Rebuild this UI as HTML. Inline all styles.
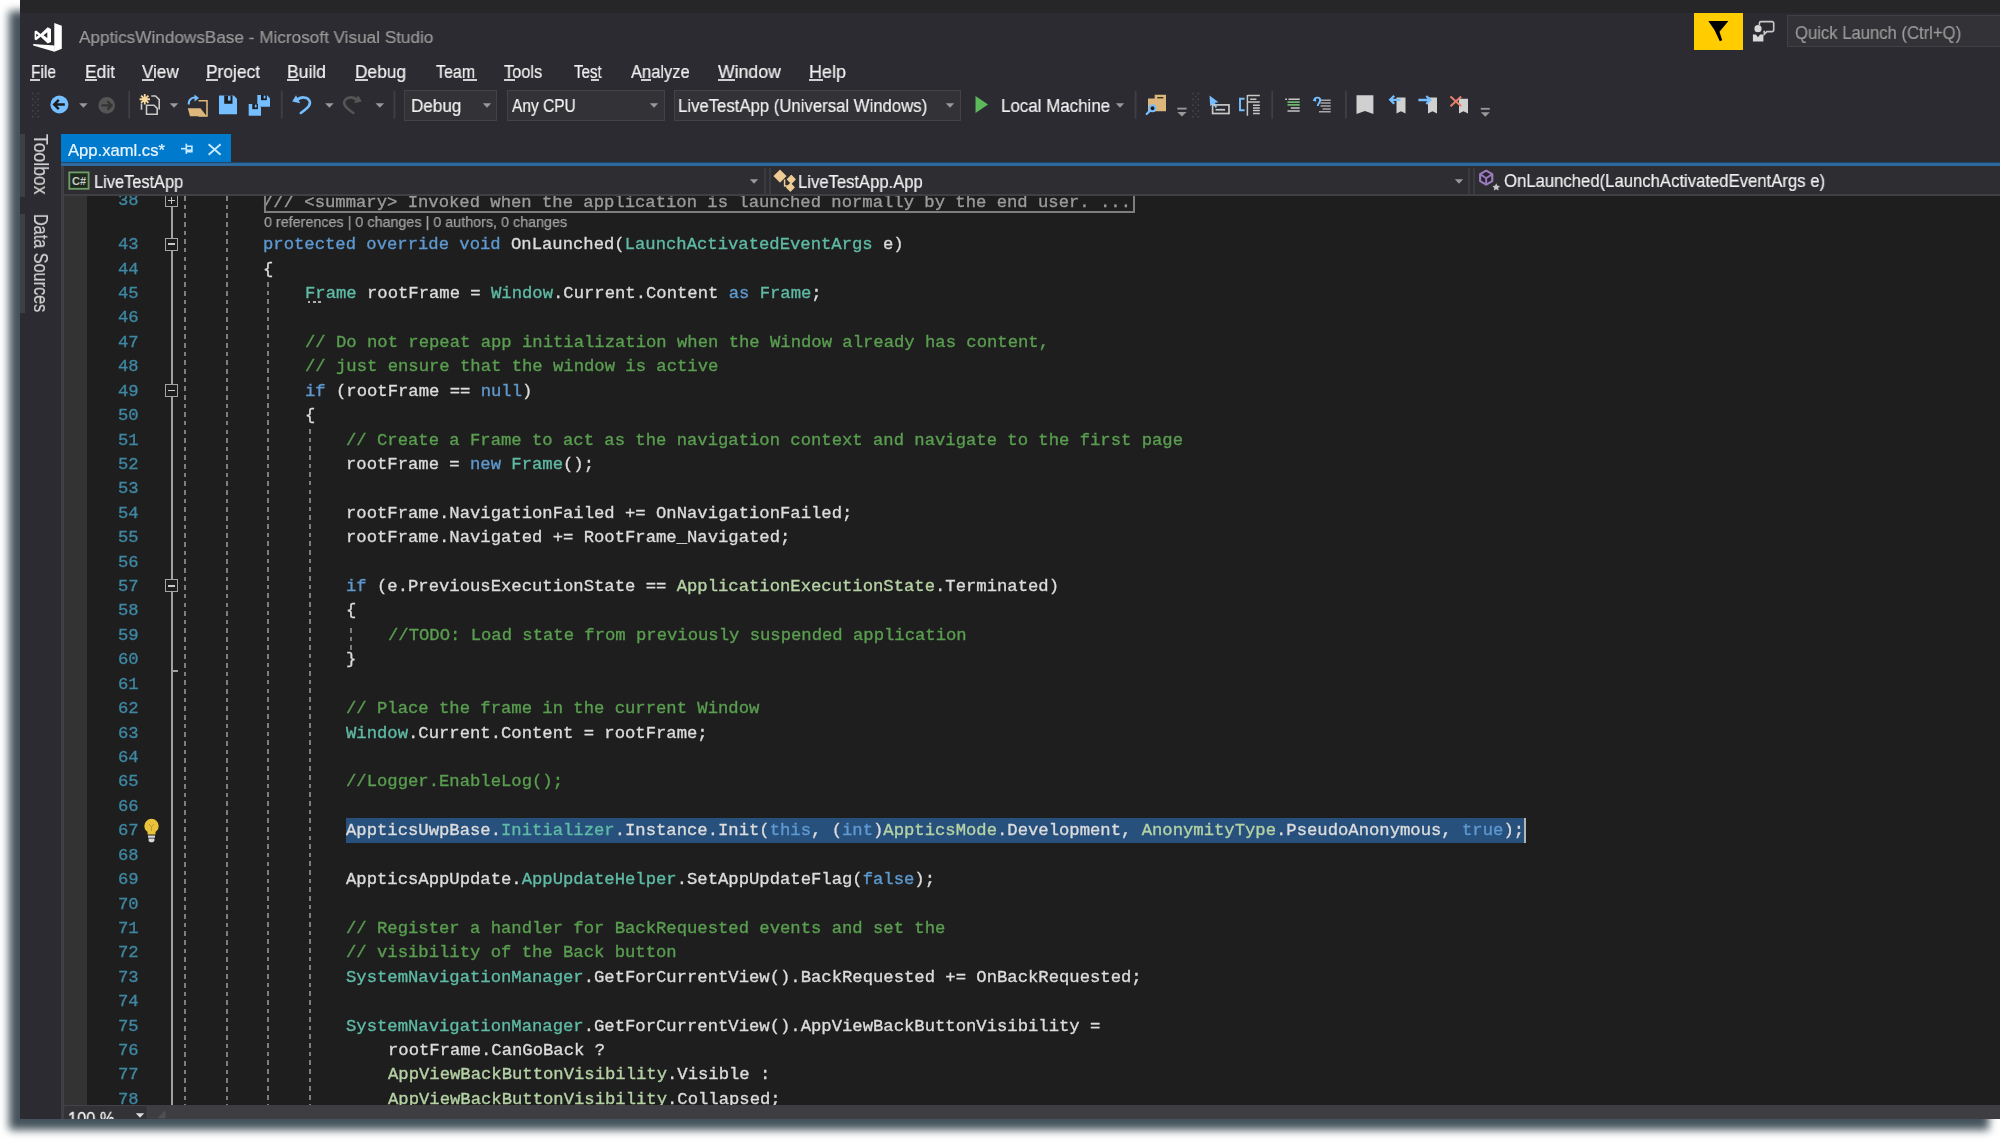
<!DOCTYPE html><html><head><meta charset="utf-8"><style>
html,body{margin:0;padding:0}
body{width:2000px;height:1139px;background:#fff;overflow:hidden;position:relative;font-family:"Liberation Sans",sans-serif;-webkit-font-smoothing:antialiased}
.m,.t{will-change:transform}
.b{position:absolute}
.t{position:absolute;white-space:pre;line-height:1;transform-origin:0 0;font-family:"Liberation Sans",sans-serif;-webkit-text-stroke:0.2px currentColor}
.t u{text-decoration:none;border-bottom:1.3px solid currentColor;display:inline-block;line-height:1;padding-bottom:0}
.m{position:absolute;white-space:pre;line-height:1;font-family:"Liberation Mono",monospace;letter-spacing:0;-webkit-text-stroke:0.35px currentColor}
svg{position:absolute;overflow:visible}

</style></head><body>
<div class="b" style="left:9px;top:11px;width:1980px;height:1119px;background:#44535d;filter:blur(4.5px)"></div>
<div class="b" style="left:20.00px;top:0.00px;width:1980.00px;height:1119.00px;background:#2B2B31;"></div>
<div class="b" style="left:20.00px;top:0.00px;width:1980.00px;height:12.60px;background:#262628;"></div>
<svg style="left:30px;top:20px;" width="36" height="36" viewBox="0 0 36 36"><g transform="translate(-30,-20)" fill="#fff"><path d="M54.3 23 L61.8 25.7 L61.8 48.8 L54.3 51.8 Z"/><path d="M33.2 44 L54.6 45.6 L54.6 51.8 L33.2 45.4 Z"/><path fill-rule="evenodd" d="M34.6 31.3 L36.3 30.4 L40.6 33.9 L47.7 27.2 L51.0 28.9 L51.0 41.9 L47.7 43.5 L40.6 36.8 L36.3 40.3 L34.6 39.5 Z M36.3 33.7 L36.3 37.0 L38.5 35.35 Z M43.5 35.3 L47.3 38.1 L47.3 32.3 Z"/></g></svg>
<div class="t" style="left:79.10px;top:29px;font-size:17.4px;color:#999999;transform:scaleX(0.9865);">AppticsWindowsBase - Microsoft Visual Studio</div>
<div class="b" style="left:1693.80px;top:13.10px;width:49.20px;height:36.60px;background:#FFCC00;"></div>
<svg style="left:1700px;top:15px;" width="40" height="34" viewBox="0 0 40 34"><g transform="translate(-1700,-15)"><path d="M1708.3 20.9 L1728.4 20.9 L1719.5 31.8 L1722.2 40.2 L1719.8 41.3 L1714.5 30.0 Z" fill="#000"/></g></svg>
<svg style="left:1750px;top:18px;" width="28" height="28" viewBox="0 0 28 28"><g transform="translate(-1750,-18)"><path d="M1759.4 25 v-1.8 a1.6 1.6 0 0 1 1.6 -1.6 h11.1 a1.6 1.6 0 0 1 1.6 1.6 v6.8 a1.6 1.6 0 0 1 -1.6 1.6 h-5.2 l-2.6 2.6 v-2.6 h-1" fill="none" stroke="#C8C8C8" stroke-width="1.6"/><circle cx="1758" cy="28.7" r="3.6" fill="#d8d8d8"/><path d="M1752.9 34.6 h3 l2.1 2.6 l2.1 -2.6 h3.3 v6.8 h-10.5 Z" fill="#d8d8d8"/></g></svg>
<div class="b" style="left:1787.40px;top:15.20px;width:222.60px;height:31.50px;background:#333337;border:1px solid #3F3F46;box-sizing:border-box"></div>
<div class="t" style="left:1794.50px;top:24px;font-size:18.5px;color:#999999;transform:scaleX(0.9000);">Quick Launch (Ctrl+Q)</div>
<div class="t" style="left:30.50px;top:63px;font-size:18.5px;color:#F1F1F1;transform:scaleX(0.8387);">File</div>
<div class="b" style="left:30.00px;top:79.30px;width:10.48px;height:1.40px;background:#D0D0D0;"></div>
<div class="t" style="left:85.00px;top:63px;font-size:18.5px;color:#F1F1F1;transform:scaleX(0.9411);">Edit</div>
<div class="b" style="left:84.50px;top:79.30px;width:12.61px;height:1.40px;background:#D0D0D0;"></div>
<div class="t" style="left:142.00px;top:63px;font-size:18.5px;color:#F1F1F1;transform:scaleX(0.9227);">View</div>
<div class="b" style="left:141.50px;top:79.30px;width:12.39px;height:1.40px;background:#D0D0D0;"></div>
<div class="t" style="left:206.00px;top:63px;font-size:18.5px;color:#F1F1F1;transform:scaleX(0.9379);">Project</div>
<div class="b" style="left:205.50px;top:79.30px;width:12.57px;height:1.40px;background:#D0D0D0;"></div>
<div class="t" style="left:287.00px;top:63px;font-size:18.5px;color:#F1F1F1;transform:scaleX(0.9480);">Build</div>
<div class="b" style="left:286.50px;top:79.30px;width:12.70px;height:1.40px;background:#D0D0D0;"></div>
<div class="t" style="left:355.00px;top:63px;font-size:18.5px;color:#F1F1F1;transform:scaleX(0.9355);">Debug</div>
<div class="b" style="left:354.50px;top:79.30px;width:13.50px;height:1.40px;background:#D0D0D0;"></div>
<div class="t" style="left:435.80px;top:63px;font-size:18.5px;color:#F1F1F1;transform:scaleX(0.8670);">Team</div>
<div class="b" style="left:462.94px;top:79.30px;width:14.36px;height:1.40px;background:#D0D0D0;"></div>
<div class="t" style="left:504.30px;top:63px;font-size:18.5px;color:#F1F1F1;transform:scaleX(0.8842);">Tools</div>
<div class="b" style="left:503.80px;top:79.30px;width:10.99px;height:1.40px;background:#D0D0D0;"></div>
<div class="t" style="left:573.60px;top:63px;font-size:18.5px;color:#F1F1F1;transform:scaleX(0.8171);">Test</div>
<div class="b" style="left:590.74px;top:79.30px;width:8.56px;height:1.40px;background:#D0D0D0;"></div>
<div class="t" style="left:630.80px;top:63px;font-size:18.5px;color:#F1F1F1;transform:scaleX(0.8919);">Analyze</div>
<div class="b" style="left:641.31px;top:79.30px;width:10.18px;height:1.40px;background:#D0D0D0;"></div>
<div class="t" style="left:718.00px;top:63px;font-size:18.5px;color:#F1F1F1;transform:scaleX(0.9544);">Window</div>
<div class="b" style="left:717.50px;top:79.30px;width:17.67px;height:1.40px;background:#D0D0D0;"></div>
<div class="t" style="left:809.40px;top:63px;font-size:18.5px;color:#F1F1F1;transform:scaleX(0.9725);">Help</div>
<div class="b" style="left:808.90px;top:79.30px;width:13.99px;height:1.40px;background:#D0D0D0;"></div>
<div class="b" style="left:404.20px;top:89.50px;width:92.80px;height:31.00px;background:#333337;border:1px solid #434346;box-sizing:border-box"></div>
<div class="t" style="left:410.80px;top:96px;font-size:19.2px;color:#F1F1F1;transform:scaleX(0.8908);">Debug</div>
<svg style="left:481.5px;top:100px;" width="10" height="10" viewBox="0 0 10 10"><path d="M0.8 3.2 L9.2 3.2 L5 7.8 Z" fill="#999"/></svg>
<div class="b" style="left:506.50px;top:89.50px;width:158.10px;height:31.00px;background:#333337;border:1px solid #434346;box-sizing:border-box"></div>
<div class="t" style="left:512.20px;top:96px;font-size:19.2px;color:#F1F1F1;transform:scaleX(0.8080);">Any CPU</div>
<svg style="left:649px;top:100px;" width="10" height="10" viewBox="0 0 10 10"><path d="M0.8 3.2 L9.2 3.2 L5 7.8 Z" fill="#999"/></svg>
<div class="b" style="left:673.90px;top:89.50px;width:286.70px;height:31.00px;background:#333337;border:1px solid #434346;box-sizing:border-box"></div>
<div class="t" style="left:677.50px;top:96px;font-size:19.2px;color:#F1F1F1;transform:scaleX(0.8719);">LiveTestApp (Universal Windows)</div>
<svg style="left:945px;top:100px;" width="10" height="10" viewBox="0 0 10 10"><path d="M0.8 3.2 L9.2 3.2 L5 7.8 Z" fill="#999"/></svg>
<svg style="left:972px;top:92px;" width="20" height="24" viewBox="0 0 20 24"><path d="M3.5 4 L16 12.5 L3.5 21 Z" fill="#5DB85C"/></svg>
<div class="t" style="left:1000.60px;top:96px;font-size:19.2px;color:#F1F1F1;transform:scaleX(0.8820);">Local Machine</div>
<svg style="left:1115px;top:100px;" width="10" height="10" viewBox="0 0 10 10"><path d="M0.8 3.2 L9.2 3.2 L5 7.8 Z" fill="#999"/></svg>
<svg style="left:0;top:0" width="2000" height="130" viewBox="0 0 2000 130"><rect x="31.900000000000002" y="92.7" width="1.6" height="1.6" fill="#46464A"/><rect x="37.400000000000006" y="92.7" width="1.6" height="1.6" fill="#46464A"/><rect x="34.650000000000006" y="95.60000000000001" width="1.6" height="1.6" fill="#3E3E42"/><rect x="31.900000000000002" y="98.5" width="1.6" height="1.6" fill="#46464A"/><rect x="37.400000000000006" y="98.5" width="1.6" height="1.6" fill="#46464A"/><rect x="34.650000000000006" y="101.4" width="1.6" height="1.6" fill="#3E3E42"/><rect x="31.900000000000002" y="104.3" width="1.6" height="1.6" fill="#46464A"/><rect x="37.400000000000006" y="104.3" width="1.6" height="1.6" fill="#46464A"/><rect x="34.650000000000006" y="107.2" width="1.6" height="1.6" fill="#3E3E42"/><rect x="31.900000000000002" y="110.10000000000001" width="1.6" height="1.6" fill="#46464A"/><rect x="37.400000000000006" y="110.10000000000001" width="1.6" height="1.6" fill="#46464A"/><rect x="34.650000000000006" y="113.00000000000001" width="1.6" height="1.6" fill="#3E3E42"/><rect x="31.900000000000002" y="115.9" width="1.6" height="1.6" fill="#46464A"/><rect x="37.400000000000006" y="115.9" width="1.6" height="1.6" fill="#46464A"/><rect x="128.29999999999998" y="90.8" width="1.8" height="27.8" fill="#3F3F46"/><rect x="280.85" y="90.8" width="1.8" height="27.8" fill="#3F3F46"/><rect x="393.5" y="90.8" width="1.8" height="27.8" fill="#3F3F46"/><rect x="1134.6999999999998" y="90.8" width="1.8" height="27.8" fill="#3F3F46"/><rect x="1271.3" y="90.8" width="1.8" height="27.8" fill="#3F3F46"/><rect x="1345.0" y="90.8" width="1.8" height="27.8" fill="#3F3F46"/><circle cx="59.4" cy="104.5" r="9" fill="#75BEFF"/><path d="M54.2 104.5 H64.8 M58.8 99.9 L54.2 104.5 L58.8 109.1" fill="none" stroke="#1B1B1C" stroke-width="2.4"/><circle cx="106.7" cy="105.4" r="8.3" fill="#555555"/><path d="M101.5 105.4 H111.5 M107.4 101.2 L111.6 105.4 L107.4 109.6" fill="none" stroke="#333336" stroke-width="2.2"/><path d="M79.10000000000001 103.2 H87.7 L83.4 107.8 Z" fill="#999999"/><path d="M169.7 103.2 H178.3 L174 107.8 Z" fill="#999999"/><path d="M325.09999999999997 103.2 H333.7 L329.4 107.8 Z" fill="#999999"/><path d="M375.5 103.2 H384.1 L379.8 107.8 Z" fill="#999999"/><path d="M144.75 99.25 L149.95 99.25 M144.75 99.25 L148.43 102.93 M144.75 99.25 L144.75 104.45 M144.75 99.25 L141.07 102.93 M144.75 99.25 L139.55 99.25 M144.75 99.25 L141.07 95.57 M144.75 99.25 L144.75 94.05 M144.75 99.25 L148.43 95.57" stroke="#F5D79E" stroke-width="1.8"/><circle cx="144.75" cy="99.25" r="2.4" fill="#F5D79E"/><path d="M151.3 96 H155.5 L159.2 99.7 V109.5" fill="none" stroke="#C8C8C8" stroke-width="1.6"/><path d="M141.5 103.5 V109.8 M146.5 105.2 H154 L157.2 108.4 V114.2 H146.5 Z" fill="none" stroke="#C8C8C8" stroke-width="1.6"/><path d="M198.5 100.8 H207 V116 H198.5" fill="none" stroke="#DCB67A" stroke-width="1.6"/><path d="M187.8 108.2 H200.5 L206.8 116.3 H190 Z" fill="#DCB67A"/><path d="M188.8 104.5 C188.2 99.5 192 96.8 196.5 97.8" fill="none" stroke="#75BEFF" stroke-width="2"/><path d="M194.5 94.6 L199 98 L194.6 101.4 Z" fill="#75BEFF"/><path d="M219 95.5 H233.8 L237 98.7 V114.3 H219 Z" fill="#75BEFF"/><rect x="224.22" y="95.5" width="8.280000000000001" height="8.272" fill="#1E1E22"/><rect x="228.0" y="96.1" width="2.5200000000000005" height="4.512" fill="#75BEFF"/><path d="M257.3 95 H266.8 L270.0 98.2 V106.75 H257.3 Z" fill="#75BEFF"/><rect x="260.983" y="95" width="5.842" height="5.17" fill="#1E1E22"/><rect x="263.65000000000003" y="95.6" width="1.778" height="2.82" fill="#75BEFF"/><path d="M248.7 104 H257.8 L261.0 107.2 V115.75 H248.7 Z" fill="#75BEFF"/><rect x="252.267" y="104" width="5.658" height="5.17" fill="#1E1E22"/><rect x="254.85" y="104.6" width="1.7220000000000002" height="2.82" fill="#75BEFF"/><path d="M296.5 100.5 C300.5 96.2 307.5 96.5 309.5 100.8 C311.2 104.5 308.5 107.5 300.8 113" fill="none" stroke="#75BEFF" stroke-width="2.6" stroke-linecap="round"/><path d="M292.2 101.4 L296 95.2 L300.2 103.3 Z" fill="#75BEFF"/><path d="M357.6 100.5 C353.6 96.2 346.6 96.5 344.6 100.8 C342.9 104.5 345.6 107.5 353.3 113" fill="none" stroke="#555555" stroke-width="2.6" stroke-linecap="round"/><path d="M361.9 101.4 L358.1 95.2 L353.9 103.3 Z" fill="#555555"/><path d="M1148 98.5 H1154.7 V94.8 H1166 V111.3 H1148 Z" fill="#DCB67A"/><rect x="1157.3" y="97" width="6" height="1.4" fill="#3a3020"/><circle cx="1152.5" cy="108.2" r="3" fill="#1E1E20" stroke="#75BEFF" stroke-width="2"/><path d="M1150.3 110.4 L1146.7 114" stroke="#75BEFF" stroke-width="2.2" stroke-linecap="round"/><rect x="1177.3" y="107.69999999999999" width="9.299999999999955" height="1.8" fill="#999999"/><path d="M1177.3 112.0 H1186.6 L1181.9499999999998 116.6 Z" fill="#999999"/><rect x="1192.2" y="92.8" width="1.6" height="1.6" fill="#46464A"/><rect x="1197.5" y="92.8" width="1.6" height="1.6" fill="#46464A"/><rect x="1194.8500000000001" y="95.7" width="1.6" height="1.6" fill="#3E3E42"/><rect x="1192.2" y="98.6" width="1.6" height="1.6" fill="#46464A"/><rect x="1197.5" y="98.6" width="1.6" height="1.6" fill="#46464A"/><rect x="1194.8500000000001" y="101.5" width="1.6" height="1.6" fill="#3E3E42"/><rect x="1192.2" y="104.39999999999999" width="1.6" height="1.6" fill="#46464A"/><rect x="1197.5" y="104.39999999999999" width="1.6" height="1.6" fill="#46464A"/><rect x="1194.8500000000001" y="107.3" width="1.6" height="1.6" fill="#3E3E42"/><rect x="1192.2" y="110.2" width="1.6" height="1.6" fill="#46464A"/><rect x="1197.5" y="110.2" width="1.6" height="1.6" fill="#46464A"/><rect x="1194.8500000000001" y="113.10000000000001" width="1.6" height="1.6" fill="#3E3E42"/><rect x="1192.2" y="116.0" width="1.6" height="1.6" fill="#46464A"/><rect x="1197.5" y="116.0" width="1.6" height="1.6" fill="#46464A"/><path d="M1209.5 95.5 L1218.5 102.2 L1214.8 102.8 L1217.2 107 L1215.4 108 L1213.1 103.8 L1210.2 106.3 Z" fill="#75BEFF"/><rect x="1212.6" y="104.9" width="16.4" height="8.6" fill="none" stroke="#C8C8C8" stroke-width="1.7"/><rect x="1215.5" y="108.9" width="9.6" height="1.7" fill="#C8C8C8"/><path d="M1244.6 98.8 H1240 V110.3 H1244.6" fill="none" stroke="#75BEFF" stroke-width="1.9"/><path d="M1247.4 95 V115.7 M1247.4 95.6 H1259.8 M1250.2 99.3 H1256.4 M1247.4 102 H1259.8 M1253 105.2 H1259.8 M1253 107.9 H1259.8 M1253 110.6 H1259.8 M1253 113.4 H1259.8" fill="none" stroke="#C8C8C8" stroke-width="1.5"/><path d="M1285.2 99.3 H1287 M1288.5 99.3 H1299.7 M1290.8 108 H1299.7 M1287.5 111 H1299.7" stroke="#C8C8C8" stroke-width="1.6"/><path d="M1287.5 102.1 H1299.7 M1287.5 104.9 H1299.7" stroke="#6DB56D" stroke-width="1.8"/><path d="M1319 100.2 H1330.7 M1320.5 103.1 H1330.7 M1320.5 106 H1330.7 M1322.5 108.9 H1330.7 M1319 111.8 H1330.7" stroke="#A8A8A8" stroke-width="1.5"/><path d="M1314.2 100.5 C1314.5 96.8 1320 96.8 1320.2 100 C1320.4 102.5 1317.8 103.2 1317.8 106" fill="none" stroke="#75BEFF" stroke-width="1.9"/><path d="M1312.5 100.4 L1315.9 97.8 L1316.3 101.8 Z" fill="#75BEFF"/><path d="M1356.5 95.3 H1373.4 V113.9 L1364.95 110.9 L1356.5 113.9 Z" fill="#D0D0D0"/><path d="M1396.5 97.5 H1405.5 V113.5 L1401.0 111.3 L1396.5 113.5 Z" fill="#D0D0D0"/><path d="M1428 97.5 H1437 V113.5 L1432.5 111.3 L1428 113.5 Z" fill="#D0D0D0"/><path d="M1459 98.7 H1468 V113.5 L1463.5 111.3 L1459 113.5 Z" fill="#D0D0D0"/><path d="M1390.2 99.8 H1400.4 M1394.2 95.8 L1390.2 99.8 L1394.2 103.8" fill="none" stroke="#75BEFF" stroke-width="2.3"/><path d="M1418.4 100 H1430.3 M1426.3 96 L1430.3 100 L1426.3 104" fill="none" stroke="#75BEFF" stroke-width="2.3"/><path d="M1450.5 96.4 L1461.2 106.2 M1461.2 96.4 L1450.5 106.2" stroke="#E8806E" stroke-width="2"/><rect x="1480.8" y="107.89999999999999" width="9.0" height="1.8" fill="#999999"/><path d="M1480.8 112.2 H1489.8 L1485.3 116.8 Z" fill="#999999"/></svg>
<div class="b" style="left:20.30px;top:134.30px;width:4.80px;height:62.40px;background:#3F3F46;"></div>
<div class="b" style="left:20.30px;top:213.70px;width:4.80px;height:99.00px;background:#3F3F46;"></div>
<div class="t" style="left:51.32px;top:134.30px;font-size:20.93px;color:#D0D0D0;transform:rotate(90deg) scaleX(0.8380);">Toolbox</div>
<div class="t" style="left:51.32px;top:214.40px;font-size:20.93px;color:#D0D0D0;transform:rotate(90deg) scaleX(0.7752);">Data Sources</div>
<div class="b" style="left:61.20px;top:134.00px;width:169.60px;height:29.00px;background:#007ACC;"></div>
<div class="b" style="left:61.20px;top:161.80px;width:1938.80px;height:5.40px;background:linear-gradient(to bottom,#20364c 0%,#2C679A 30%,#2F6FA3 50%,#2C679A 70%,#283848 100%);"></div>
<div class="t" style="left:68.00px;top:142px;font-size:16.3px;color:#EAF6FF;transform:scaleX(1.0198);">App.xaml.cs*</div>
<svg style="left:178px;top:140px;" width="20" height="20" viewBox="0 0 20 20"><g transform="translate(-178,-140)" fill="none" stroke="#C8EAFF" stroke-width="1.6"><path d="M181 148.7 H186.3"/><path d="M186.3 143.7 V153.9"/><path d="M186.3 146.2 H191.9 V151.6 H186.3"/></g><g transform="translate(-178,-140)"><rect x="186.3" y="149.4" width="5.6" height="2.6" fill="#C8EAFF"/></g></svg>
<svg style="left:205px;top:141px;" width="20" height="20" viewBox="0 0 20 20"><g transform="translate(-205,-141)" stroke="#C8EAFF" stroke-width="1.9"><path d="M208.6 144.3 L220.6 154.7"/><path d="M220.6 144.3 L208.6 154.7"/></g></svg>
<div class="b" style="left:60.50px;top:166.00px;width:3.30px;height:953.00px;background:#3F3F46;"></div>
<div class="b" style="left:63.80px;top:166.40px;width:1936.20px;height:27.80px;background:#2D2D32;"></div>
<div class="b" style="left:63.80px;top:194.20px;width:1936.20px;height:2.20px;background:#3F3F46;"></div>
<div class="b" style="left:764.00px;top:168.00px;width:1.50px;height:26.20px;background:#3A3A3F;"></div>
<div class="b" style="left:769.00px;top:168.00px;width:1.50px;height:26.20px;background:#3A3A3F;"></div>
<div class="b" style="left:1468.00px;top:168.00px;width:1.50px;height:26.20px;background:#3A3A3F;"></div>
<div class="b" style="left:1473.40px;top:168.00px;width:1.50px;height:26.20px;background:#3A3A3F;"></div>
<svg style="left:749px;top:176px;" width="10" height="10" viewBox="0 0 10 10"><path d="M0.8 3.2 L9.2 3.2 L5 7.8 Z" fill="#999"/></svg>
<svg style="left:1454px;top:176px;" width="10" height="10" viewBox="0 0 10 10"><path d="M0.8 3.2 L9.2 3.2 L5 7.8 Z" fill="#999"/></svg>
<svg style="left:66px;top:169px;" width="26" height="24" viewBox="0 0 26 24"><g transform="translate(-66,-169)"><rect x="69.3" y="172.4" width="19.3" height="16.4" fill="#1f2a1f" stroke="#6E9F69" stroke-width="1.8"/><text x="72" y="185.2" font-family="Liberation Sans" font-size="11" font-weight="bold" fill="#C8C8C8">C#</text></g></svg>
<div class="t" style="left:93.50px;top:173px;font-size:18.5px;color:#F1F1F1;transform:scaleX(0.8849);">LiveTestApp</div>
<svg style="left:771px;top:168px;" width="28" height="26" viewBox="0 0 28 26"><g transform="translate(-771,-168)" fill="#EECB92" stroke="#EECB92" stroke-width="1.2" stroke-linejoin="round"><path d="M780 170.4 L785.8 176.1 L780 181.8 L774.2 176.1 Z"/><path d="M791.3 175.5 L795.2 179.4 L791.3 183.3 L787.4 179.4 Z"/><path d="M790.4 183.5 L794.2 187.3 L790.4 191.1 L786.6 187.3 Z"/><path d="M784.6 179.5 V186 H788" fill="none" stroke-width="1.5"/></g></svg>
<div class="t" style="left:798.40px;top:173px;font-size:18.5px;color:#F1F1F1;transform:scaleX(0.8986);">LiveTestApp.App</div>
<svg style="left:1476px;top:166px;" width="28" height="28" viewBox="0 0 28 28"><g transform="translate(-1476,-166)"><path d="M1486.20 170.60 L1492.26 174.10 L1492.26 181.10 L1486.20 184.60 L1480.14 181.10 L1480.14 174.10 Z" fill="#2A2230" stroke="#9A7CBD" stroke-width="2.2" stroke-linejoin="round"/><path d="M1480.14 174.10 L1486.20 178.20 L1492.26 174.10 M1486.20 178.20 L1486.20 184.60" fill="none" stroke="#9A7CBD" stroke-width="1.9"/><path d="M1496.2 183.3 l1.2 2.4 l2.6 0.4 l-1.9 1.8 l0.5 2.6 l-2.4 -1.3 l-2.4 1.3 l0.5 -2.6 l-1.9 -1.8 l2.6 -0.4 Z" fill="#C8C8C8"/></g></svg>
<div class="t" style="left:1503.50px;top:172px;font-size:18.5px;color:#F1F1F1;transform:scaleX(0.9021);">OnLaunched(LaunchActivatedEventArgs e)</div>
<div class="b" style="left:63.80px;top:196.40px;width:23.50px;height:908.60px;background:#333333;"></div>
<div class="b" style="left:87.30px;top:196.40px;width:1912.70px;height:908.60px;background:#1E1E1E;"></div>
<div class="b" style="left:0;top:196.4px;width:2000px;height:908.6px;overflow:hidden">
<div class="b" style="left:346.1px;top:621.30px;width:1178.50px;height:25.8px;background:#27507D"></div>
<div class="b" style="left:1524.4px;top:621.60px;width:1.8px;height:25px;background:#B4B4B4"></div>
<div class="m" style="left:117.72px;top:40.00px;font-size:17.233px;color:#3F87A3;">43</div>
<div class="m" style="left:117.72px;top:65.00px;font-size:17.233px;color:#3F87A3;">44</div>
<div class="m" style="left:117.72px;top:89.00px;font-size:17.233px;color:#3F87A3;">45</div>
<div class="m" style="left:117.72px;top:113.00px;font-size:17.233px;color:#3F87A3;">46</div>
<div class="m" style="left:117.72px;top:138.00px;font-size:17.233px;color:#3F87A3;">47</div>
<div class="m" style="left:117.72px;top:162.00px;font-size:17.233px;color:#3F87A3;">48</div>
<div class="m" style="left:117.72px;top:187.00px;font-size:17.233px;color:#3F87A3;">49</div>
<div class="m" style="left:117.72px;top:211.00px;font-size:17.233px;color:#3F87A3;">50</div>
<div class="m" style="left:117.72px;top:236.00px;font-size:17.233px;color:#3F87A3;">51</div>
<div class="m" style="left:117.72px;top:260.00px;font-size:17.233px;color:#3F87A3;">52</div>
<div class="m" style="left:117.72px;top:284.00px;font-size:17.233px;color:#3F87A3;">53</div>
<div class="m" style="left:117.72px;top:309.00px;font-size:17.233px;color:#3F87A3;">54</div>
<div class="m" style="left:117.72px;top:333.00px;font-size:17.233px;color:#3F87A3;">55</div>
<div class="m" style="left:117.72px;top:358.00px;font-size:17.233px;color:#3F87A3;">56</div>
<div class="m" style="left:117.72px;top:382.00px;font-size:17.233px;color:#3F87A3;">57</div>
<div class="m" style="left:117.72px;top:406.00px;font-size:17.233px;color:#3F87A3;">58</div>
<div class="m" style="left:117.72px;top:431.00px;font-size:17.233px;color:#3F87A3;">59</div>
<div class="m" style="left:117.72px;top:455.00px;font-size:17.233px;color:#3F87A3;">60</div>
<div class="m" style="left:117.72px;top:480.00px;font-size:17.233px;color:#3F87A3;">61</div>
<div class="m" style="left:117.72px;top:504.00px;font-size:17.233px;color:#3F87A3;">62</div>
<div class="m" style="left:117.72px;top:529.00px;font-size:17.233px;color:#3F87A3;">63</div>
<div class="m" style="left:117.72px;top:553.00px;font-size:17.233px;color:#3F87A3;">64</div>
<div class="m" style="left:117.72px;top:577.00px;font-size:17.233px;color:#3F87A3;">65</div>
<div class="m" style="left:117.72px;top:602.00px;font-size:17.233px;color:#3F87A3;">66</div>
<div class="m" style="left:117.72px;top:626.00px;font-size:17.233px;color:#3F87A3;">67</div>
<div class="m" style="left:117.72px;top:651.00px;font-size:17.233px;color:#3F87A3;">68</div>
<div class="m" style="left:117.72px;top:675.00px;font-size:17.233px;color:#3F87A3;">69</div>
<div class="m" style="left:117.72px;top:700.00px;font-size:17.233px;color:#3F87A3;">70</div>
<div class="m" style="left:117.72px;top:724.00px;font-size:17.233px;color:#3F87A3;">71</div>
<div class="m" style="left:117.72px;top:748.00px;font-size:17.233px;color:#3F87A3;">72</div>
<div class="m" style="left:117.72px;top:773.00px;font-size:17.233px;color:#3F87A3;">73</div>
<div class="m" style="left:117.72px;top:797.00px;font-size:17.233px;color:#3F87A3;">74</div>
<div class="m" style="left:117.72px;top:822.00px;font-size:17.233px;color:#3F87A3;">75</div>
<div class="m" style="left:117.72px;top:846.00px;font-size:17.233px;color:#3F87A3;">76</div>
<div class="m" style="left:117.72px;top:870.00px;font-size:17.233px;color:#3F87A3;">77</div>
<div class="m" style="left:117.72px;top:895.00px;font-size:17.233px;color:#3F87A3;">78</div>
<div class="m" style="left:117.72px;top:-4.00px;font-size:17.233px;color:#3F87A3;">38</div>
<div class="m" style="left:263.42px;top:40.00px;font-size:17.233px"><span style="color:#5E99D0">protected override void</span><span style="color:#DCDCDC"> OnLaunched(</span><span style="color:#5FBBA5">LaunchActivatedEventArgs</span><span style="color:#DCDCDC"> e)</span></div>
<div class="m" style="left:263.42px;top:65.00px;font-size:17.233px"><span style="color:#DCDCDC">{</span></div>
<div class="m" style="left:304.78px;top:89.00px;font-size:17.233px"><span style="color:#5FBBA5">Frame</span><span style="color:#DCDCDC"> rootFrame = </span><span style="color:#5FBBA5">Window</span><span style="color:#DCDCDC">.Current.Content </span><span style="color:#5E99D0">as</span><span style="color:#DCDCDC"> </span><span style="color:#5FBBA5">Frame</span><span style="color:#DCDCDC">;</span></div>
<div class="m" style="left:304.78px;top:138.00px;font-size:17.233px"><span style="color:#5A9E50">// Do not repeat app initialization when the Window already has content,</span></div>
<div class="m" style="left:304.78px;top:162.00px;font-size:17.233px"><span style="color:#5A9E50">// just ensure that the window is active</span></div>
<div class="m" style="left:304.78px;top:187.00px;font-size:17.233px"><span style="color:#5E99D0">if</span><span style="color:#DCDCDC"> (rootFrame == </span><span style="color:#5E99D0">null</span><span style="color:#DCDCDC">)</span></div>
<div class="m" style="left:304.78px;top:211.00px;font-size:17.233px"><span style="color:#DCDCDC">{</span></div>
<div class="m" style="left:346.14px;top:236.00px;font-size:17.233px"><span style="color:#5A9E50">// Create a Frame to act as the navigation context and navigate to the first page</span></div>
<div class="m" style="left:346.14px;top:260.00px;font-size:17.233px"><span style="color:#DCDCDC">rootFrame = </span><span style="color:#5E99D0">new</span><span style="color:#DCDCDC"> </span><span style="color:#5FBBA5">Frame</span><span style="color:#DCDCDC">();</span></div>
<div class="m" style="left:346.14px;top:309.00px;font-size:17.233px"><span style="color:#DCDCDC">rootFrame.NavigationFailed += OnNavigationFailed;</span></div>
<div class="m" style="left:346.14px;top:333.00px;font-size:17.233px"><span style="color:#DCDCDC">rootFrame.Navigated += RootFrame_Navigated;</span></div>
<div class="m" style="left:346.14px;top:382.00px;font-size:17.233px"><span style="color:#5E99D0">if</span><span style="color:#DCDCDC"> (e.PreviousExecutionState == </span><span style="color:#B5D2A5">ApplicationExecutionState</span><span style="color:#DCDCDC">.Terminated)</span></div>
<div class="m" style="left:346.14px;top:406.00px;font-size:17.233px"><span style="color:#DCDCDC">{</span></div>
<div class="m" style="left:387.50px;top:431.00px;font-size:17.233px"><span style="color:#5A9E50">//TODO: Load state from previously suspended application</span></div>
<div class="m" style="left:346.14px;top:455.00px;font-size:17.233px"><span style="color:#DCDCDC">}</span></div>
<div class="m" style="left:346.14px;top:504.00px;font-size:17.233px"><span style="color:#5A9E50">// Place the frame in the current Window</span></div>
<div class="m" style="left:346.14px;top:529.00px;font-size:17.233px"><span style="color:#5FBBA5">Window</span><span style="color:#DCDCDC">.Current.Content = rootFrame;</span></div>
<div class="m" style="left:346.14px;top:577.00px;font-size:17.233px"><span style="color:#5A9E50">//Logger.EnableLog();</span></div>
<div class="m" style="left:346.14px;top:626.00px;font-size:17.233px"><span style="color:#DCDCDC">AppticsUwpBase.</span><span style="color:#5FBBA5">Initializer</span><span style="color:#DCDCDC">.Instance.Init(</span><span style="color:#5E99D0">this</span><span style="color:#DCDCDC">, (</span><span style="color:#5E99D0">int</span><span style="color:#DCDCDC">)</span><span style="color:#B5D2A5">AppticsMode</span><span style="color:#DCDCDC">.Development, </span><span style="color:#B5D2A5">AnonymityType</span><span style="color:#DCDCDC">.PseudoAnonymous, </span><span style="color:#5E99D0">true</span><span style="color:#DCDCDC">);</span></div>
<div class="m" style="left:346.14px;top:675.00px;font-size:17.233px"><span style="color:#DCDCDC">AppticsAppUpdate.</span><span style="color:#5FBBA5">AppUpdateHelper</span><span style="color:#DCDCDC">.SetAppUpdateFlag(</span><span style="color:#5E99D0">false</span><span style="color:#DCDCDC">);</span></div>
<div class="m" style="left:346.14px;top:724.00px;font-size:17.233px"><span style="color:#5A9E50">// Register a handler for BackRequested events and set the</span></div>
<div class="m" style="left:346.14px;top:748.00px;font-size:17.233px"><span style="color:#5A9E50">// visibility of the Back button</span></div>
<div class="m" style="left:346.14px;top:773.00px;font-size:17.233px"><span style="color:#5FBBA5">SystemNavigationManager</span><span style="color:#DCDCDC">.GetForCurrentView().BackRequested += OnBackRequested;</span></div>
<div class="m" style="left:346.14px;top:822.00px;font-size:17.233px"><span style="color:#5FBBA5">SystemNavigationManager</span><span style="color:#DCDCDC">.GetForCurrentView().AppViewBackButtonVisibility =</span></div>
<div class="m" style="left:387.50px;top:846.00px;font-size:17.233px"><span style="color:#DCDCDC">rootFrame.CanGoBack ?</span></div>
<div class="m" style="left:387.50px;top:870.00px;font-size:17.233px"><span style="color:#B5D2A5">AppViewBackButtonVisibility</span><span style="color:#DCDCDC">.Visible :</span></div>
<div class="m" style="left:387.50px;top:895.00px;font-size:17.233px"><span style="color:#B5D2A5">AppViewBackButtonVisibility</span><span style="color:#DCDCDC">.Collapsed;</span></div>
<div class="m" style="left:263.42px;top:-2.00px;font-size:17.233px;color:#9B9B9B;">/// &lt;summary&gt; Invoked when the application is launched normally by the end user. ...</div>
<div class="b" style="left:263.7px;top:-46.40px;width:871.50px;height:63.10px;border:2px solid #7E7E7E;box-sizing:border-box"></div>
</div>
<div class="t" style="left:264.00px;top:214px;font-size:15.4px;color:#A0A0A0;transform:scaleX(0.9315);-webkit-text-stroke:0.25px #A0A0A0">0 references | 0 changes | 0 authors, 0 changes</div>
<div class="b" style="left:0;top:196.4px;width:2000px;height:908.6px;overflow:hidden">
<div class="b" style="left:170.8px;top:0;width:2.4px;height:910px;background:#A0A0A0"></div>
<div class="b" style="left:164.8px;top:-2.20px;width:13.2px;height:13px;border:1.7px solid #A5A5A5;box-sizing:border-box;background:#1E1E1E"></div>
<div class="b" style="left:167.6px;top:3.40px;width:7.6px;height:1.7px;background:#C8C8C8"></div>
<div class="b" style="left:170.5px;top:0.60px;width:1.7px;height:7.4px;background:#C8C8C8"></div>
<div class="b" style="left:164.8px;top:41.20px;width:13.2px;height:13px;border:1.7px solid #A5A5A5;box-sizing:border-box;background:#1E1E1E"></div>
<div class="b" style="left:167.6px;top:46.80px;width:7.6px;height:1.7px;background:#C8C8C8"></div>
<div class="b" style="left:164.8px;top:187.72px;width:13.2px;height:13px;border:1.7px solid #A5A5A5;box-sizing:border-box;background:#1E1E1E"></div>
<div class="b" style="left:167.6px;top:193.32px;width:7.6px;height:1.7px;background:#C8C8C8"></div>
<div class="b" style="left:164.8px;top:383.08px;width:13.2px;height:13px;border:1.7px solid #A5A5A5;box-sizing:border-box;background:#1E1E1E"></div>
<div class="b" style="left:167.6px;top:388.68px;width:7.6px;height:1.7px;background:#C8C8C8"></div>
<div class="b" style="left:172px;top:474.00px;width:6px;height:1.8px;background:#A0A0A0"></div>
<div class="b" style="left:184px;top:-0.75px;width:2px;height:909.35px;background:repeating-linear-gradient(to bottom,#7E7E7E 0,#7E7E7E 4.6px,transparent 4.6px,transparent 8.65px)"></div>
<div class="b" style="left:226px;top:-0.75px;width:2px;height:909.35px;background:repeating-linear-gradient(to bottom,#7E7E7E 0,#7E7E7E 4.6px,transparent 4.6px,transparent 8.65px)"></div>
<div class="b" style="left:267px;top:85.75px;width:2px;height:822.85px;background:repeating-linear-gradient(to bottom,#7E7E7E 0,#7E7E7E 4.6px,transparent 4.6px,transparent 8.65px)"></div>
<div class="b" style="left:309px;top:232.80px;width:2px;height:675.80px;background:repeating-linear-gradient(to bottom,#7E7E7E 0,#7E7E7E 4.6px,transparent 4.6px,transparent 8.65px)"></div>
<div class="b" style="left:350px;top:431.75px;width:2px;height:21.85px;background:repeating-linear-gradient(to bottom,#7E7E7E 0,#7E7E7E 4.6px,transparent 4.6px,transparent 8.65px)"></div>
<svg style="left:140px;top:618.6px;" width="24" height="30" viewBox="0 0 24 30"><g transform="translate(-140,-815)"><circle cx="151.5" cy="826" r="7.2" fill="#E8C23A"/><path d="M147.5 831 h8 v3.5 h-8 Z" fill="#E8C23A"/><path d="M148 835.5 h7 v2.2 h-7 Z M148.6 838.6 h5.8 v2.4 l-1.5 1.2 h-2.8 l-1.5 -1.2 Z" fill="#D8D8D8"/><path d="M149 824 l2.5 3 l2.5 -3 M151.5 827 v4" fill="none" stroke="#B8962A" stroke-width="0.9"/></g></svg>
<div class="b" style="left:308.00px;top:104.20px;width:2.4px;height:2.4px;background:#B0B0B0"></div>
<div class="b" style="left:313.20px;top:104.20px;width:2.4px;height:2.4px;background:#B0B0B0"></div>
<div class="b" style="left:318.40px;top:104.20px;width:2.4px;height:2.4px;background:#B0B0B0"></div>
</div>
<div class="b" style="left:63.80px;top:1105.00px;width:1936.20px;height:14.00px;background:#3E3E42;"></div>
<div class="b" style="left:63.80px;top:1105.00px;width:84.20px;height:14.00px;background:#333337;border-top:1px solid #434346;border-right:1px solid #434346;box-sizing:border-box"></div>
<div class="b" style="left:0;top:0;width:2000px;height:1119px;overflow:hidden">
<div class="t" style="left:67.50px;top:1110px;font-size:18.5px;color:#F1F1F1;transform:scaleX(0.8865);-webkit-text-stroke:0.3px #F1F1F1">100 %</div>
</div>
<svg style="left:135px;top:1110px;" width="10" height="10" viewBox="0 0 10 10"><path d="M0.8 3.2 L9.2 3.2 L5 7.8 Z" fill="#DDD"/></svg>
<svg style="left:150px;top:1105px;" width="20" height="14" viewBox="0 0 20 14"><path d="M7.4 13.2 L15.4 5.2 L15.4 13.2 Z" fill="#505054"/></svg>
</body></html>
